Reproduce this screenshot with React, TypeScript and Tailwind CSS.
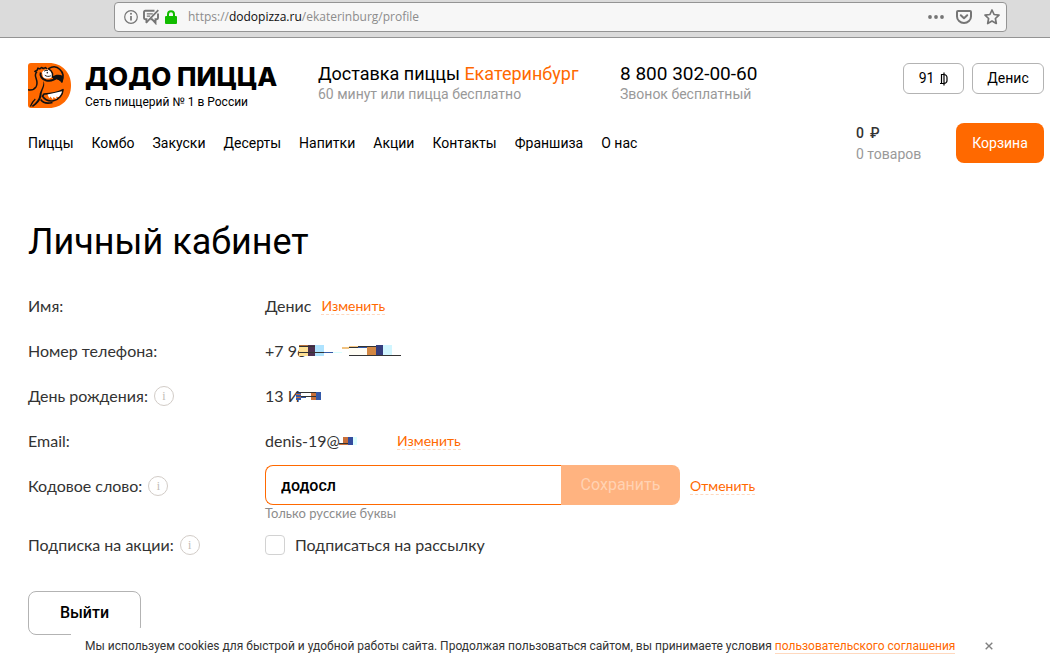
import { useState } from "react";
import type { ReactNode } from "react";

const navItems = ["Пиццы", "Комбо", "Закуски", "Десерты", "Напитки", "Акции", "Контакты", "Франшиза", "О нас"];

function BrowserBar() {
  return (
    <div className="flex h-[38px] shrink-0 items-start border-b border-[#949494] bg-[#dbdbdb] pt-0.5 pr-[43px] pl-[114px]">
      <div className="flex h-[30px] grow items-center rounded-[4px] border border-[#949494] bg-[#f7f7f7] pr-1.5 pl-2 text-[#757575]">
        <svg className="size-4" viewBox="0 0 16 16" fill="none" stroke="currentColor" aria-hidden="true">
          <circle cx="8" cy="8" r="6.3" strokeWidth="1.2" />
          <path d="M8 7v4.6" strokeWidth="1.7" />
          <circle cx="8" cy="4.8" r="1" fill="currentColor" stroke="none" />
        </svg>
        <svg className="ml-1 size-4" viewBox="0 0 16 16" fill="none" stroke="currentColor" aria-hidden="true">
          <path d="M11.5 1.8H2.2Q1 1.8 1 3v6q0 1.200 1.200 1.200H3.500V13.500M15 4.500V9q0 1.200-1.200 1.200H12.500V14L9 10.200H7.500" strokeWidth="1.9" />
          <path d="M3.800 4.800h6M3.800 7.200h3.400" strokeWidth="1.3" />
          <path d="M15.300 1.200 3 13.800" strokeWidth="1.7" />
        </svg>
        <svg className="ml-1 size-4" viewBox="0 0 16 16" aria-hidden="true">
          <path d="M5 8V5.200a3 3 0 0 1 6 0V8" fill="none" stroke="#12bc00" strokeWidth="2" />
          <rect x="2" y="7" width="12" height="8" rx="1" fill="#12bc00" />
        </svg>
        <span className="ml-[9px] font-['Open_Sans',sans-serif] text-[12px] text-[#8c8c8c]">
          https://<span className="text-[#0c0c0d]">dodopizza.ru</span>/ekaterinburg/profile
        </span>
        <div className="ml-auto flex items-center gap-3">
          <svg className="size-4" viewBox="0 0 16 16" fill="currentColor" aria-hidden="true">
            <circle cx="2" cy="8" r="1.900" />
            <circle cx="8" cy="8" r="1.900" />
            <circle cx="14" cy="8" r="1.900" />
          </svg>
          <svg className="size-4" viewBox="0 0 16 16" fill="none" stroke="currentColor" strokeWidth="2" strokeLinejoin="round" aria-hidden="true">
            <path d="M2 2h12q1 0 1 1v4.500a7 6.500 0 0 1-14 0V3q0-1 1-1z" />
            <path d="M4.800 6.300 8 9.300l3.200-3" strokeLinecap="round" />
          </svg>
          <svg className="size-4" viewBox="0 0 16 16" fill="none" stroke="currentColor" strokeWidth="1.700" strokeLinejoin="round" aria-hidden="true">
            <path d="m8 1 2.100 4.500 4.900.600-3.600 3.400.900 5L8 12.100l-4.300 2.400.900-5L1 6.100l4.900-.600z" />
          </svg>
        </div>
      </div>
    </div>
  );
}

function DodoMark() {
  return (
    <svg className="h-[45px] w-[43px] shrink-0" viewBox="0 0 43 45" aria-hidden="true">
      <path d="M3 0H21C34 0 43 9.500 43 22.500S34 45 21 45H3Q0 45 0 42V3Q0 0 3 0z" fill="#ff6900" />
      <path d="M0 26.800c3.500.6 6.300-.3 8-3 2-3.400 1-6 0-8.800-.8-2.200-.8-4.500.6-5.800L6.800 8.300l2.400-1.200.8-2 1.800.8L13.500 4.500l1.800 1 2.200-.9 1.500 1.700" fill="none" stroke="#111" strokeWidth="1.500" strokeLinejoin="round" />
      <path d="M14 9.500c1.500-3 5-3.800 8-2.300l2 3.300v3.500c-2 2-7 2-9 0z" fill="#fff" />
      <path d="M12.700 9.500c-1.200 3.500 1.500 7 5.600 8 4.200.9 8-.5 10.700-2.900" fill="none" stroke="#111" strokeWidth="2" />
      <path d="M16 8.300c1.200-1 2.700-1.200 4-.5M16.800 12.200c1.500 1.300 4 1.600 6 .6" fill="none" stroke="#111" strokeWidth=".9" />
      <circle cx="19.300" cy="9.800" r=".8" fill="#111" />
      <path d="M20.500 5.700c4-2.500 8.500-2.200 11.500.9 3.200 2.800 4 7 1.900 12.400-1.500-2.800-4.700-4-9.400-5l0-3.500-1.300-2.500z" fill="#ff6900" stroke="#111" strokeWidth="1.500" strokeLinejoin="round" />
      <path d="M24 13.800c3.500-2.300 6.800-2.600 10.700-1.100.8 2.400.4 4.700-.8 7-1.600-2.800-4.700-4-8.600-3.700z" fill="#111" />
      <path d="M15.500 18c1.600 3.500.3 6.500-1 9.500-1 2.300-.8 4-1.200 6-.7 4-4 7.500-8 10.300l-2-.5c5-3.600 7.700-7.300 8.200-11.300.5-4.500 4.300-8 4-14z" fill="#111" />
      <path d="M2.300 43.500c1.600-3.500 3.300-6 5-7.500" fill="none" stroke="#111" strokeWidth="1.200" />
      <path d="M16 31c6.500-.2 13-1 19-4.300-.3 5.200-4 10-9.500 11-4.500.8-8.700-1-11-4.400z" fill="#ff6900" stroke="#111" strokeWidth="1.600" strokeLinejoin="round" />
      <path d="m19.500 31.500 14.500-3.200c-.5 2.500-1.800 4.400-3.300 5.700l-2.500-.3.300 2.200-3.200-2-.3 2.700-2.700-3-1 1.600z" fill="#fff" />
      <path d="M12.700 36.500c2.300 3.500 7 4.300 11.800 3" fill="none" stroke="#111" strokeWidth="1.600" />
    </svg>
  );
}

function Header() {
  return (
    <header className="pr-1.5 pl-7 font-['Roboto',sans-serif] text-black">
      <div className="flex h-[70px] pt-[25px]">
        <a href="#" className="flex w-[290px] shrink-0 gap-3.5">
          <DodoMark />
          <div>
            <div className="font-['Inter',sans-serif] text-[26px] leading-[28px] font-extrabold whitespace-nowrap">ДОДО ПИЦЦА</div>
            <div className="text-[12px] leading-[22px] whitespace-nowrap">Сеть пиццерий № 1 в России</div>
          </div>
        </a>
        <div className="w-[302px] shrink-0">
          <div className="text-[18px] leading-[22px] whitespace-nowrap">
            Доставка пиццы <a href="#" className="text-[#ff6900]">Екатеринбург</a>
          </div>
          <div className="text-[14px] leading-[18px] text-[#999]">60 минут или пицца бесплатно</div>
        </div>
        <div className="shrink-0">
          <div className="text-[19px] leading-[22px]">8 800 302-00-60</div>
          <div className="text-[14px] leading-[18px] text-[#999]">Звонок бесплатный</div>
        </div>
        <div className="ml-auto flex gap-2 text-[14px]">
          <button className="flex h-[31px] w-[61px] items-center justify-center gap-1.5 rounded-[6px] border border-[#b3b3b3]">
            91
            <svg className="h-3.5 w-2" viewBox="0 0 8 14" fill="none" stroke="currentColor" strokeWidth="1.200" aria-label="додорублей">
              <path d="M0 11.500h1.500V2.500H4a3 3 0 0 1 3 3v3a3 3 0 0 1-3 3H1.500M4 .5v13" />
            </svg>
          </button>
          <button className="h-[31px] w-[72px] rounded-[6px] border border-[#b3b3b3]">Денис</button>
        </div>
      </div>
      <div className="mt-[15px] flex h-10 items-center text-[14px]">
        <nav className="flex gap-[18px] whitespace-nowrap">
          {navItems.map((item) => (
            <a key={item} href="#">{item}</a>
          ))}
        </nav>
        <div className="ml-auto w-[100px] pt-0.5 leading-[21px]">
          <div className="flex gap-1.5 font-medium text-[#333]">
            <span>0</span>
            <span>₽</span>
          </div>
          <div className="text-[#999]">0 товаров</div>
        </div>
        <button className="h-10 w-[88px] rounded-[8px] bg-[#ff6900] text-white">Корзина</button>
      </div>
    </header>
  );
}

function Info() {
  return (
    <span className="flex size-5 items-center justify-center rounded-full border border-[#d2ccc7] font-['Liberation_Serif',serif] text-[12px] leading-none text-[#c2bbb5]">
      i
    </span>
  );
}

function Action({ children }: { children: ReactNode }) {
  return (
    <a href="#" className="mt-0.5 border-b border-dashed border-[#ffd9bf] text-[14px] leading-[16px] text-[#ff6900]">
      {children}
    </a>
  );
}

function Row({ label, info, htmlFor, children }: { label: string; info?: boolean; htmlFor?: string; children: ReactNode }) {
  return (
    <div className="grid grid-cols-[237px_1fr] items-start">
      <div className="flex h-[45px] items-center gap-1.5">
        {htmlFor ? <label htmlFor={htmlFor}>{label}</label> : <span>{label}</span>}
        {info && <Info />}
      </div>
      {children}
    </div>
  );
}

function PhoneSmudge() {
  return (
    <svg className="-ml-[7px] h-3 w-[104px]" viewBox="0 0 104 12" shapeRendering="crispEdges" aria-hidden="true">
      <path d="M0 1h9v10H0z" fill="#ffe093" />
      <path d="M0 0h9v1H0z" fill="#b4703c" />
      <path d="M9 0h7v11H9z" fill="#4d3050" />
      <path d="M16 0h9v11h-9z" fill="#aee3ff" />
      <path d="M0 1h16v1H0zM0 7h25v1H0z" fill="#333" />
      <path d="M25 7h9v1h-9z" fill="#3459a8" />
      <path d="M34 7h9v1h-9z" fill="#d9ffff" />
      <path d="M43 2h7v2h-7zM50 1h9v1h-9z" fill="#f2c482" />
      <path d="M50 3h18v7H50z" fill="#fffdf5" />
      <path d="M50 2h9v1h-9zM59 1h18v1H59z" fill="#333" />
      <path d="M59 2h9v1h-9z" fill="#3459a8" />
      <path d="M68 2h9v8h-9z" fill="#d28743" />
      <path d="M77 0h7v10h-7z" fill="#343d7d" />
      <path d="M84 0h9v10h-9z" fill="#d1f6ff" />
      <path d="M50 10h52v1H50z" fill="#333" />
    </svg>
  );
}

function Profile() {
  const [word, setWord] = useState("додосл");
  const [subscribed, setSubscribed] = useState(false);
  return (
    <main className="pt-[52px] pr-1.5 pb-7 pl-7 font-['Lato',sans-serif] text-[16px] text-[#333]">
      <h1 className="mb-[14px] font-['Roboto',sans-serif] text-[36px] leading-[54px] text-black">Личный кабинет</h1>
      <Row label="Имя:">
        <div className="flex h-[45px] items-center gap-2.5">
          Денис <Action>Изменить</Action>
        </div>
      </Row>
      <Row label="Номер телефона:">
        <div className="flex h-[45px] items-center">
          +7 96
          <PhoneSmudge />
        </div>
      </Row>
      <Row label="День рождения:" info>
        <div className="flex h-[45px] items-center">
          13 И
          <svg className="-ml-1 h-2 w-7" viewBox="0 0 28 8" shapeRendering="crispEdges" aria-hidden="true">
            <path d="M0 0h5v8H0z" fill="#3459a8" />
            <path d="M0 2h5v1H0zM0 5h5v1H0z" fill="#c9703a" />
            <path d="M5 5h5v1H5z" fill="#3459a8" />
            <path d="M15 0h5v8h-5z" fill="#c9703a" />
            <path d="M20 0h5v8h-5z" fill="#3459a8" />
            <path d="M0 0h20v1H0zM5 4h15v1H5z" fill="#333" />
          </svg>
        </div>
      </Row>
      <Row label="Email:">
        <div className="flex h-[45px] items-center">
          denis-19@
          <svg className="mr-10 -ml-px h-2 w-[18px]" viewBox="0 0 18 8" shapeRendering="crispEdges" aria-hidden="true">
            <path d="M0 7h4v1H0z" fill="#c9703a" />
            <path d="M4 0h5v8H4z" fill="#c9703a" />
            <path d="M9 0h5v8H9z" fill="#344c9e" />
            <path d="M14 0h4v8h-4z" fill="#dcffff" />
            <path d="M0 6h9v1H0z" fill="#333" />
          </svg>
          <Action>Изменить</Action>
        </div>
      </Row>
      <Row label="Кодовое слово:" info htmlFor="code-word">
        <div className="flex h-[59px] flex-col pt-0.5">
          <div className="flex items-center">
            <input
              id="code-word"
              value={word}
              onChange={(event) => setWord(event.target.value)}
              className="h-10 w-[296px] rounded-l-[8px] border border-r-0 border-[#ff6900] px-[15px] font-['Roboto',sans-serif] text-[16px] font-medium text-black outline-none"
            />
            <button disabled className="mr-2.5 h-10 w-[119px] rounded-r-[8px] bg-[#ffb380] font-['Roboto',sans-serif] text-[16px] text-[#ffd2b3]">
              Сохранить
            </button>
            <Action>Отменить</Action>
          </div>
          <span className="text-[13px] leading-[17px] text-[#8c8c8c]">Только русские буквы</span>
        </div>
      </Row>
      <Row label="Подписка на акции:" info>
        <label className="flex h-[45px] items-center gap-2.5">
          <input
            type="checkbox"
            checked={subscribed}
            onChange={(event) => setSubscribed(event.target.checked)}
            className="size-5 appearance-none rounded-[4px] border border-[#d2d2d2] bg-white checked:bg-[#ff6900]"
          />
          Подписаться на рассылку
        </label>
      </Row>
      <button className="mt-6 h-11 w-[113px] rounded-[8px] border border-[#b3b3b3] font-['Roboto',sans-serif] text-[16px] font-medium text-black">
        Выйти
      </button>
    </main>
  );
}

function CookieNotice() {
  const [open, setOpen] = useState(true);
  if (!open) return null;
  return (
    <div className="fixed right-0 bottom-0 left-[71px] flex h-[35px] items-center bg-white pl-3.5 font-['Roboto',sans-serif] text-[12px] whitespace-nowrap text-[#333]">
      <span>
        Мы используем cookies для быстрой и удобной работы сайта. Продолжая пользоваться сайтом, вы принимаете условия{" "}
        <a href="#" className="border-b border-[#ffd9bf] text-[#ff6900]">пользовательского соглашения</a>
      </span>
      <button aria-label="Закрыть" onClick={() => setOpen(false)} className="ml-[30px] text-[#808080]">
        <svg className="size-2" viewBox="0 0 8 8" stroke="currentColor" strokeWidth="1.400" aria-hidden="true">
          <path d="m.7.7 6.600 6.600M7.300.7.700 7.300" />
        </svg>
      </button>
    </div>
  );
}

export default function App() {
  return (
    <div className="min-h-screen bg-white">
      <BrowserBar />
      <Header />
      <Profile />
      <CookieNotice />
    </div>
  );
}
